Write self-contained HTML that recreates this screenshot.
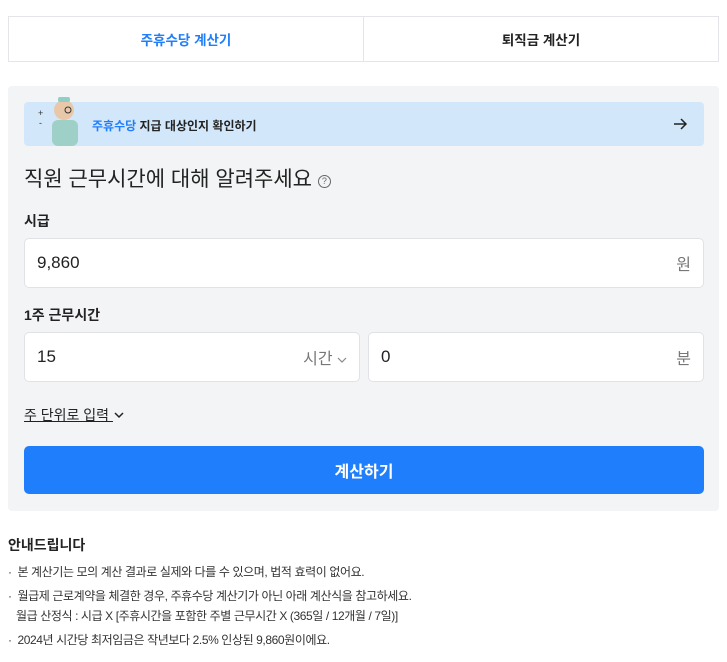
<!DOCTYPE html>
<html><head><meta charset="utf-8"><style>
*{box-sizing:border-box;margin:0;padding:0}
body{width:727px;height:662px;background:#fff;font-family:"Liberation Sans","Noto Sans CJK KR",sans-serif;color:#222;position:relative;overflow:hidden}
.abs{position:absolute}
.tabs{left:8px;top:16px;width:711px;height:46px;border:1px solid #e3e5e8;display:flex}
.tabs div{flex:1;display:flex;align-items:center;justify-content:center;font-size:13.5px;font-weight:bold}
.tabs div+div{border-left:1px solid #e3e5e8}
.panel{left:8px;top:86px;width:711px;height:425px;background:#f3f4f6;border-radius:4px}
.banner{left:24px;top:102px;width:680px;height:44px;background:#d3e7fb;border-radius:4px}
.inp{background:#fff;border:1px solid #e0e2e5;border-radius:5px;height:50px;font-size:17px;display:flex;align-items:center;justify-content:space-between;padding:0 12px}
.unit{color:#777;font-size:16px}
.lbl{font-size:14px;font-weight:bold;color:#222}
.note{font-size:12px;color:#333;left:8px;letter-spacing:-0.4px}
</style></head><body>
<div class="abs tabs"><div style="color:#1f7efb">주휴수당 계산기</div><div>퇴직금 계산기</div></div>
<div class="abs panel"></div>
<div class="abs banner">
 <svg class="abs" style="left:12px;top:-6px" width="50" height="50" viewBox="0 0 50 50">
  <text x="2" y="20" font-size="9" fill="#333">+</text><text x="3" y="30" font-size="9" fill="#333">-</text>
  <rect x="16" y="24" width="26" height="26" rx="6" fill="#9fd0c8"/>
  <circle cx="28" cy="14" r="10" fill="#e8c8a8"/>
  <rect x="22" y="1" width="12" height="5" rx="2" fill="#8fcfc6"/>
  <circle cx="32" cy="14" r="3" fill="none" stroke="#333"/>
 </svg>
 <div class="abs" style="left:68px;top:15px;font-size:12px;font-weight:bold"><span style="color:#1f7efb">주휴수당</span> 지급 대상인지 확인하기</div>
 <svg class="abs" style="left:648px;top:14px" width="16" height="16" viewBox="0 0 16 16"><path d="M2 8H14M9 3L14 8L9 13" fill="none" stroke="#222" stroke-width="1.5"/></svg>
</div>
<div class="abs" style="left:24px;top:163px;font-size:21px;color:#222">직원 근무시간에 대해 알려주세요 <span style="display:inline-block;width:13px;height:13px;border:1.3px solid #666;border-radius:50%;font-size:9px;line-height:11px;text-align:center;color:#666;vertical-align:2px">?</span></div>
<div class="abs lbl" style="left:24px;top:211px">시급</div>
<div class="abs inp" style="left:24px;top:238px;width:680px"><span>9,860</span><span class="unit">원</span></div>
<div class="abs lbl" style="left:24px;top:305px">1주 근무시간</div>
<div class="abs inp" style="left:24px;top:332px;width:336px"><span>15</span><span class="unit">시간 <svg width="10" height="8" viewBox="0 0 10 8"><path d="M1 2L5 6L9 2" fill="none" stroke="#888" stroke-width="1.2"/></svg></span></div>
<div class="abs inp" style="left:368px;top:332px;width:336px"><span>0</span><span class="unit">분</span></div>
<div class="abs" style="left:24px;top:405px;font-size:14px;text-decoration:underline">주 단위로 입력 <svg width="12" height="10" viewBox="0 0 12 10" style="vertical-align:0"><path d="M2 3L6 7L10 3" fill="none" stroke="#222" stroke-width="1.5"/></svg></div>
<div class="abs" style="left:24px;top:446px;width:680px;height:48px;background:#1f7efb;border-radius:5px;color:#fff;font-weight:bold;font-size:16px;display:flex;align-items:center;justify-content:center">계산하기</div>
<div class="abs" style="left:8px;top:535px;font-size:14px;font-weight:bold">안내드립니다</div>
<div class="abs note" style="top:563px">· &nbsp;본 계산기는 모의 계산 결과로 실제와 다를 수 있으며, 법적 효력이 없어요.</div>
<div class="abs note" style="top:587px">· &nbsp;월급제 근로계약을 체결한 경우, 주휴수당 계산기가 아닌 아래 계산식을 참고하세요.</div>
<div class="abs note" style="top:607px;left:16px">월급 산정식 : 시급 X [주휴시간을 포함한 주별 근무시간 X (365일 / 12개월 / 7일)]</div>
<div class="abs note" style="top:631px">· &nbsp;2024년 시간당 최저임금은 작년보다 2.5% 인상된 9,860원이에요.</div>
</body></html>
